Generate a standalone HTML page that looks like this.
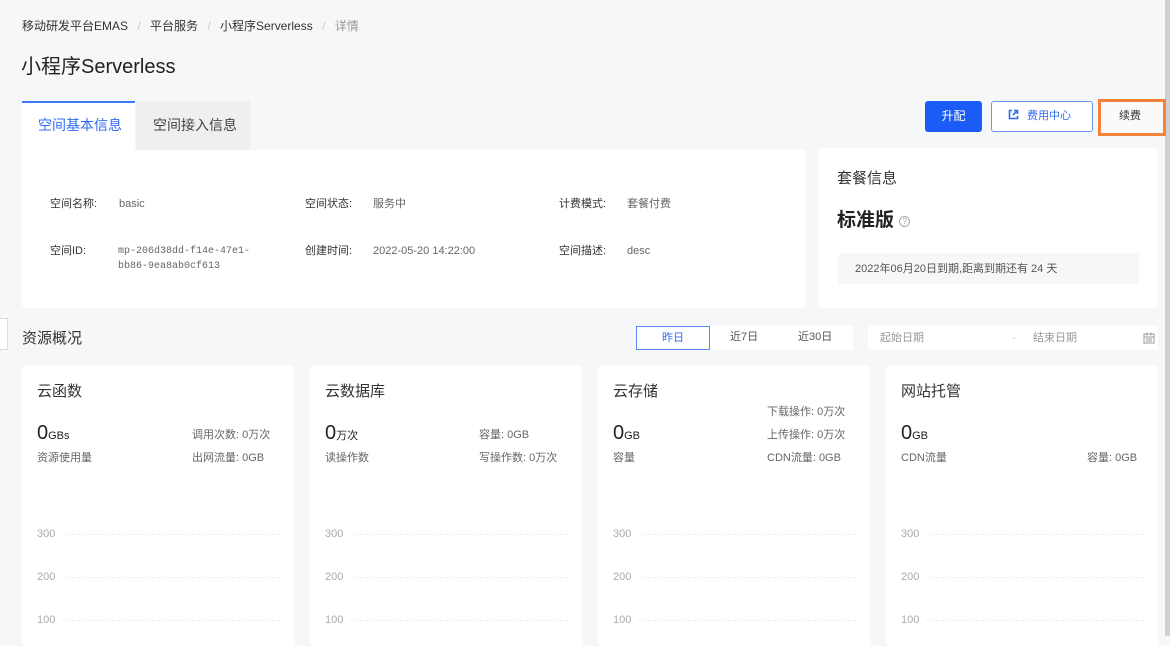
<!DOCTYPE html>
<html><head><meta charset="utf-8"><style>
*{margin:0;padding:0;box-sizing:border-box}
body{width:1170px;height:636px;overflow:hidden;background:#f6f7f9;font-family:"Liberation Sans","Noto Sans CJK SC",sans-serif;color:#333;position:relative}
.a{position:absolute;white-space:nowrap;line-height:1.2}
.card{position:absolute;background:#fff;border-radius:4px}
.lbl{font-size:11px;color:#333;line-height:14px}
.val{font-size:11px;color:#666;line-height:14px}
.g{font-size:11px;color:#666;line-height:14px}
.ax{font-size:11px;color:#aaa;line-height:14px}
.dash{position:absolute;height:0;border-top:1px dashed #eee}
</style></head><body>
<div class="a" style="left:22px;top:19px;font-size:12px;color:#333">移动研发平台EMAS <span style="color:#ccc;margin:0 6px">/</span> 平台服务 <span style="color:#ccc;margin:0 6px">/</span> 小程序Serverless <span style="color:#ccc;margin:0 6px">/</span> <span style="color:#999">详情</span></div>
<div class="a" style="left:21px;top:55px;font-size:20px;color:#222;line-height:24px">小程序Serverless</div>

<div class="a" style="left:22px;top:101px;width:113px;height:50px;background:#fff;border-top:2px solid #3d7bf7"></div>
<div class="a" style="left:38px;top:117px;font-size:14px;color:#2f6cf5">空间基本信息</div>
<div class="a" style="left:136px;top:101px;width:114px;height:49px;background:#efefef"></div>
<div class="a" style="left:153px;top:117px;font-size:14px;color:#444">空间接入信息</div>

<div class="a" style="left:925px;top:101px;width:57px;height:31px;background:#1a5cf5;border-radius:3px;color:#fff;font-size:12px;text-align:center;line-height:31px">升配</div>
<div class="a" style="left:991px;top:101px;width:102px;height:31px;border:1px solid #6e96f6;border-radius:3px;background:#fff;color:#2f6cf5;font-size:11px;line-height:29px;padding-left:16px">
<svg width="11" height="11" viewBox="0 0 11 11" style="vertical-align:-1px;margin-right:8px"><path d="M4 1.5H1.5v8h8V7M6 1.5h3.5V5M9.5 1.5 5 6" fill="none" stroke="#2f6cf5" stroke-width="1.6"/></svg>费用中心</div>
<div class="a" style="left:1165px;top:0;width:5px;height:636px;background:#d0d0d0"></div>
<div class="a" style="left:1098px;top:99px;width:68px;height:37px;border:3px solid #f5823a;background:#fafafa"></div>
<div class="a" style="left:1119px;top:110px;font-size:11px;color:#333">续费</div>

<div class="card" style="left:22px;top:150px;width:784px;height:158px;border-radius:0 4px 4px 4px"></div>
<div class="a lbl" style="left:50px;top:197px">空间名称:</div><div class="a val" style="left:119px;top:197px">basic</div>
<div class="a lbl" style="left:305px;top:197px">空间状态:</div><div class="a val" style="left:373px;top:197px">服务中</div>
<div class="a lbl" style="left:559px;top:197px">计费模式:</div><div class="a val" style="left:627px;top:197px">套餐付费</div>
<div class="a lbl" style="left:50px;top:244px">空间ID:</div><div class="a val" style="left:118px;top:244px;font-family:'Liberation Mono',monospace;font-size:10px;line-height:15px">mp-206d38dd-f14e-47e1-<br>bb86-9ea8ab0cf613</div>
<div class="a lbl" style="left:305px;top:244px">创建时间:</div><div class="a val" style="left:373px;top:244px">2022-05-20 14:22:00</div>
<div class="a lbl" style="left:559px;top:244px">空间描述:</div><div class="a val" style="left:627px;top:244px">desc</div>

<div class="card" style="left:818px;top:148px;width:340px;height:160px"></div>
<div class="a" style="left:837px;top:170px;font-size:15px;color:#333">套餐信息</div>
<div class="a" style="left:837px;top:210px;font-size:19px;font-weight:bold;color:#222">标准版 <span style="display:inline-block;width:11px;height:11px;border:1px solid #aaa;border-radius:50%;font-size:8px;color:#aaa;text-align:center;line-height:10px;font-weight:normal;vertical-align:2px">?</span></div>
<div class="a" style="left:838px;top:253px;width:301px;height:31px;background:#f6f7f9;border-radius:3px"></div>
<div class="a" style="left:855px;top:262px;font-size:11px;color:#555;line-height:14px">2022年06月20日到期,距离到期还有 24 天</div>

<div class="a" style="left:0;top:318px;width:8px;height:32px;background:#fff;border:1px solid #ddd;border-left:none"></div>
<div class="a" style="left:22px;top:330px;font-size:15px;color:#333">资源概况</div>
<div class="a" style="left:636px;top:326px;width:217px;height:24px;background:#fff"></div>
<div class="a" style="left:636px;top:326px;width:74px;height:24px;border:1px solid #5b86f4;color:#2f6cf5;font-size:11px;text-align:center;line-height:22px">昨日</div>
<div class="a lbl" style="left:730px;top:330px;color:#555">近7日</div>
<div class="a lbl" style="left:798px;top:330px;color:#555">近30日</div>
<div class="a" style="left:868px;top:326px;width:290px;height:24px;background:#fff"></div>
<div class="a lbl" style="left:880px;top:331px;color:#999">起始日期</div>
<div class="a lbl" style="left:1012px;top:331px;color:#ccc">-</div>
<div class="a lbl" style="left:1033px;top:331px;color:#999">结束日期</div>
<svg class="a" style="left:1143px;top:332px" width="12" height="12" viewBox="0 0 12 12"><rect x="1" y="2" width="10" height="9" fill="none" stroke="#999"/><path d="M1 5h10M4 0.5v3M8 0.5v3M3 7h6M3 9h6" stroke="#999"/></svg>

<div class="card" style="left:22px;top:366px;width:272px;height:280px"></div>
<div class="card" style="left:310px;top:366px;width:272px;height:280px"></div>
<div class="card" style="left:598px;top:366px;width:272px;height:280px"></div>
<div class="card" style="left:886px;top:366px;width:272px;height:280px"></div>

<div class="a" style="left:37px;top:383px;font-size:15px">云函数</div>
<div class="a" style="left:37px;top:421px;font-size:20px;color:#222">0<span style="font-size:11px">GBs</span></div>
<div class="a g" style="left:192px;top:428px">调用次数: 0万次</div>
<div class="a g" style="left:37px;top:451px">资源使用量</div>
<div class="a g" style="left:192px;top:451px">出网流量: 0GB</div>

<div class="a" style="left:325px;top:383px;font-size:15px">云数据库</div>
<div class="a" style="left:325px;top:421px;font-size:20px;color:#222">0<span style="font-size:11px">万次</span></div>
<div class="a g" style="left:479px;top:428px">容量: 0GB</div>
<div class="a g" style="left:325px;top:451px">读操作数</div>
<div class="a g" style="left:479px;top:451px">写操作数: 0万次</div>

<div class="a" style="left:613px;top:383px;font-size:15px">云存储</div>
<div class="a g" style="left:767px;top:405px">下载操作: 0万次</div>
<div class="a" style="left:613px;top:421px;font-size:20px;color:#222">0<span style="font-size:11px">GB</span></div>
<div class="a g" style="left:767px;top:428px">上传操作: 0万次</div>
<div class="a g" style="left:613px;top:451px">容量</div>
<div class="a g" style="left:767px;top:451px">CDN流量: 0GB</div>

<div class="a" style="left:901px;top:383px;font-size:15px">网站托管</div>
<div class="a" style="left:901px;top:421px;font-size:20px;color:#222">0<span style="font-size:11px">GB</span></div>
<div class="a g" style="left:901px;top:451px">CDN流量</div>
<div class="a g" style="left:1087px;top:451px">容量: 0GB</div>

<div class="a ax" style="left:37px;top:527px">300</div><div class="a ax" style="left:37px;top:570px">200</div><div class="a ax" style="left:37px;top:613px">100</div>
<div class="a ax" style="left:325px;top:527px">300</div><div class="a ax" style="left:325px;top:570px">200</div><div class="a ax" style="left:325px;top:613px">100</div>
<div class="a ax" style="left:613px;top:527px">300</div><div class="a ax" style="left:613px;top:570px">200</div><div class="a ax" style="left:613px;top:613px">100</div>
<div class="a ax" style="left:901px;top:527px">300</div><div class="a ax" style="left:901px;top:570px">200</div><div class="a ax" style="left:901px;top:613px">100</div>
<div class="dash" style="left:62px;top:534px;width:218px"></div><div class="dash" style="left:62px;top:577px;width:218px"></div><div class="dash" style="left:62px;top:620px;width:218px"></div>
<div class="dash" style="left:350px;top:534px;width:218px"></div><div class="dash" style="left:350px;top:577px;width:218px"></div><div class="dash" style="left:350px;top:620px;width:218px"></div>
<div class="dash" style="left:638px;top:534px;width:218px"></div><div class="dash" style="left:638px;top:577px;width:218px"></div><div class="dash" style="left:638px;top:620px;width:218px"></div>
<div class="dash" style="left:926px;top:534px;width:218px"></div><div class="dash" style="left:926px;top:577px;width:218px"></div><div class="dash" style="left:926px;top:620px;width:218px"></div>
</body></html>
